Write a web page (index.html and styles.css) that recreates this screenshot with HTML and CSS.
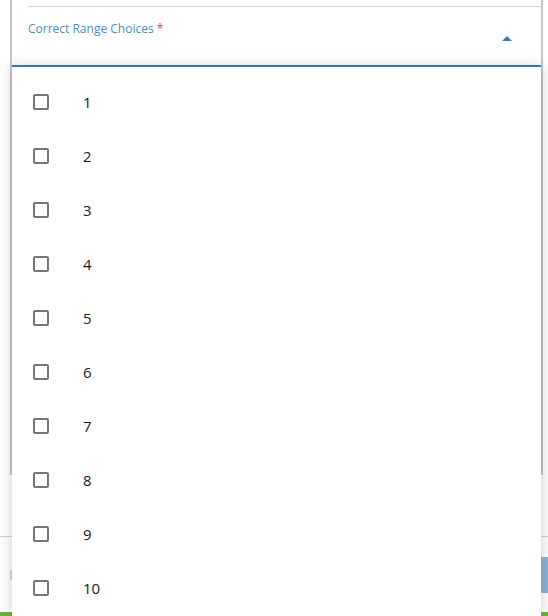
FILE: index.html
```html
<!DOCTYPE html>
<html>
<head>
<meta charset="utf-8">
<link rel="stylesheet" href="styles.css">
</head>
<body>
<div class="page">
  <div class="sheet">
    <div class="scroll">
      <div class="prev-field"></div>
      <div class="field">
        <span class="label">Correct Range Choices <span class="req">*</span></span>
        <span class="caret"></span>
      </div>
    </div>
    <div class="footer">
      <div class="footer-gap"></div>
      <div class="footer-bar">
        <span class="footer-mark"></span>
        <span class="footer-btn"></span>
      </div>
      <div class="footer-green"></div>
    </div>
  </div>
  <ul class="menu">
    <li class="item"><span class="box"></span><span class="txt">1</span></li>
    <li class="item"><span class="box"></span><span class="txt">2</span></li>
    <li class="item"><span class="box"></span><span class="txt">3</span></li>
    <li class="item"><span class="box"></span><span class="txt">4</span></li>
    <li class="item"><span class="box"></span><span class="txt">5</span></li>
    <li class="item"><span class="box"></span><span class="txt">6</span></li>
    <li class="item"><span class="box"></span><span class="txt">7</span></li>
    <li class="item"><span class="box"></span><span class="txt">8</span></li>
    <li class="item"><span class="box"></span><span class="txt">9</span></li>
    <li class="item"><span class="box"></span><span class="txt">10</span></li>
  </ul>
</div>
</body>
</html>
```
FILE: styles.css
```css
html, body {
  margin: 0;
  padding: 0;
  background: #fff;
}
body {
  font-family: "Open Sans", "Liberation Sans", sans-serif;
}
.page {
  position: relative;
  width: 548px;
  height: 616px;
  overflow: hidden;
  background: #fff;
}
.sheet {
  margin: 0 5px 0 10px;
  display: flex;
  flex-direction: column;
  height: 616px;
}
.scroll {
  height: 475px;
  border-left: 2px solid #c6c6c6;
  border-right: 2px solid #c6c6c6;
  box-sizing: border-box;
}
.prev-field {
  height: 6px;
  margin-left: 16px;
  border-bottom: 1px solid #d6d6d6;
}
.field {
  height: 60px;
  box-sizing: border-box;
  padding: 14px 29px 0 16px;
  display: flex;
  justify-content: space-between;
  align-items: flex-start;
  border-bottom: 2px solid #3b7ec0;
}
.label {
  font-size: 12px;
  line-height: 16px;
  color: #4a8dce;
}
.req {
  color: #e0493c;
}
.caret {
  width: 0;
  height: 0;
  margin-top: 15px;
  border-left: 5px solid transparent;
  border-right: 5px solid transparent;
  border-bottom: 5px solid #3a7fc3;
}
.footer {
  flex: 1;
  display: flex;
  flex-direction: column;
  margin: 0 -5px 0 -10px;
}
.footer-gap {
  height: 61px;
  border-bottom: 1px solid #cfcfcf;
}
.footer-bar {
  flex: 1;
  display: flex;
  justify-content: space-between;
  align-items: center;
  padding-left: 10px;
}
.footer-mark {
  width: 2px;
  height: 10px;
  background: #d8d8d8;
}
.footer-btn {
  width: 80px;
  height: 36px;
  background: #8fb4d7;
}
.footer-green {
  height: 4px;
  background: #6bb33d;
}
.menu {
  position: absolute;
  top: 67px;
  left: 12px;
  width: 529px;
  bottom: 0;
  margin: 0;
  padding: 8px 0 0 0;
  list-style: none;
  background: #fff;
  box-shadow: 0 0 14px rgba(0, 0, 0, 0.2);
  box-sizing: border-box;
}
.item {
  height: 54px;
  display: flex;
  align-items: center;
  padding-left: 21px;
}
.box {
  width: 16px;
  height: 16px;
  box-sizing: border-box;
  border: 2px solid #767676;
  border-radius: 2px;
  flex: none;
}
.txt {
  margin-left: 34px;
  font-size: 15px;
  color: #1a1a1a;
}
```
